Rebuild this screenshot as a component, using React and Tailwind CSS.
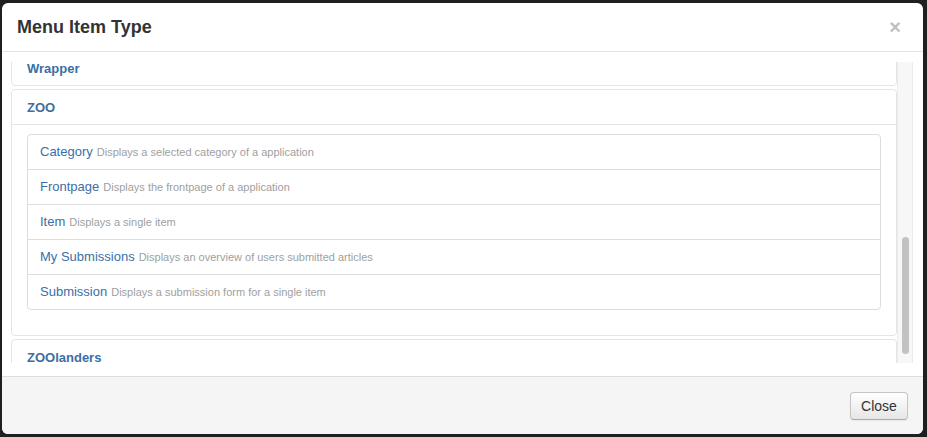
import React from "react";

const rows = [
  ["Category", "Displays a selected category of a application"],
  ["Frontpage", "Displays the frontpage of a application"],
  ["Item", "Displays a single item"],
  ["My Submissions", "Displays an overview of users submitted articles"],
  ["Submission", "Displays a submission form for a single item"],
];

function Heading({ children }) {
  return (
    <div className="h-[34px] px-[15px] pt-[2px] flex items-center text-[13px] font-bold text-[#3a6fa6]">
      {children}
    </div>
  );
}

export default function App() {
  return (
    <div
      className="w-[927px] h-[437px] bg-[#1e1f21] pt-[3px] pl-[2px] overflow-hidden"
      style={{ fontFamily: '"Liberation Sans", Arial, sans-serif' }}
    >
      <div className="w-[921px] h-[431px] bg-white rounded-[6px] flex flex-col overflow-hidden">
        {/* header */}
        <div className="h-[49px] shrink-0 border-b border-[#e5e5e5] pl-[15px] pr-[22px] flex items-center justify-between">
          <h3 className="text-[18px] leading-[30px] font-bold text-[#333]">Menu Item Type</h3>
          <span className="text-[20px] font-bold leading-none text-[#c0c0c0]">×</span>
        </div>

        {/* body */}
        <div className="h-[324px] shrink-0 pt-[10px] pl-[9px] pr-[10px] pb-[13px] flex">
          <div className="flex-1 overflow-hidden">
            <div className="-mt-[12px]">
              <div className="border border-[#e5e5e5] rounded-[4px] mb-[3px]">
                <Heading>Wrapper</Heading>
              </div>
              <div className="border border-[#e5e5e5] rounded-[4px] mb-[3px]">
                <Heading>ZOO</Heading>
                <div className="border-t border-[#e5e5e5] px-[15px] pt-[9px] pb-[9px]">
                  <div className="border border-[#dddddd] rounded-[4px] mb-[16px]">
                    {rows.map(([t, d], i) => (
                      <div
                        key={t}
                        className={
                          "h-[34px] pl-[12px] flex items-center whitespace-nowrap " +
                          (i > 0 ? "border-t border-[#dddddd] h-[35px]" : "")
                        }
                      >
                        <span className="text-[13px] text-[#3a6fa6]">{t}</span>
                        <span className="text-[11px] text-[#a0a0a0] ml-[4px] pt-[1px]">{d}</span>
                      </div>
                    ))}
                  </div>
                </div>
              </div>
              <div className="border border-[#e5e5e5] rounded-[4px]">
                <Heading>ZOOlanders</Heading>
              </div>
            </div>
          </div>
          {/* scrollbar */}
          <div className="w-[16px] shrink-0 bg-[#f7f7f7] border-l border-r border-[#ebebeb] pt-[175px] pl-[4px]">
            <div className="w-[7px] h-[117px] rounded-full bg-[#c2c2c2]" />
          </div>
        </div>

        {/* footer */}
        <div className="flex-1 border-t border-[#dddddd] bg-[#f5f5f5] flex items-center justify-end pr-[15px] pt-[1px]">
          <button className="w-[58px] h-[28px] rounded-[4px] border border-[#c5c5c5] border-b-[#a9a9a9] bg-gradient-to-b from-white to-[#e6e6e6] text-[14px] text-[#333] shadow-[inset_0_1px_0_rgba(255,255,255,0.2),0_1px_2px_rgba(0,0,0,0.05)]">
            Close
          </button>
        </div>
      </div>
    </div>
  );
}
